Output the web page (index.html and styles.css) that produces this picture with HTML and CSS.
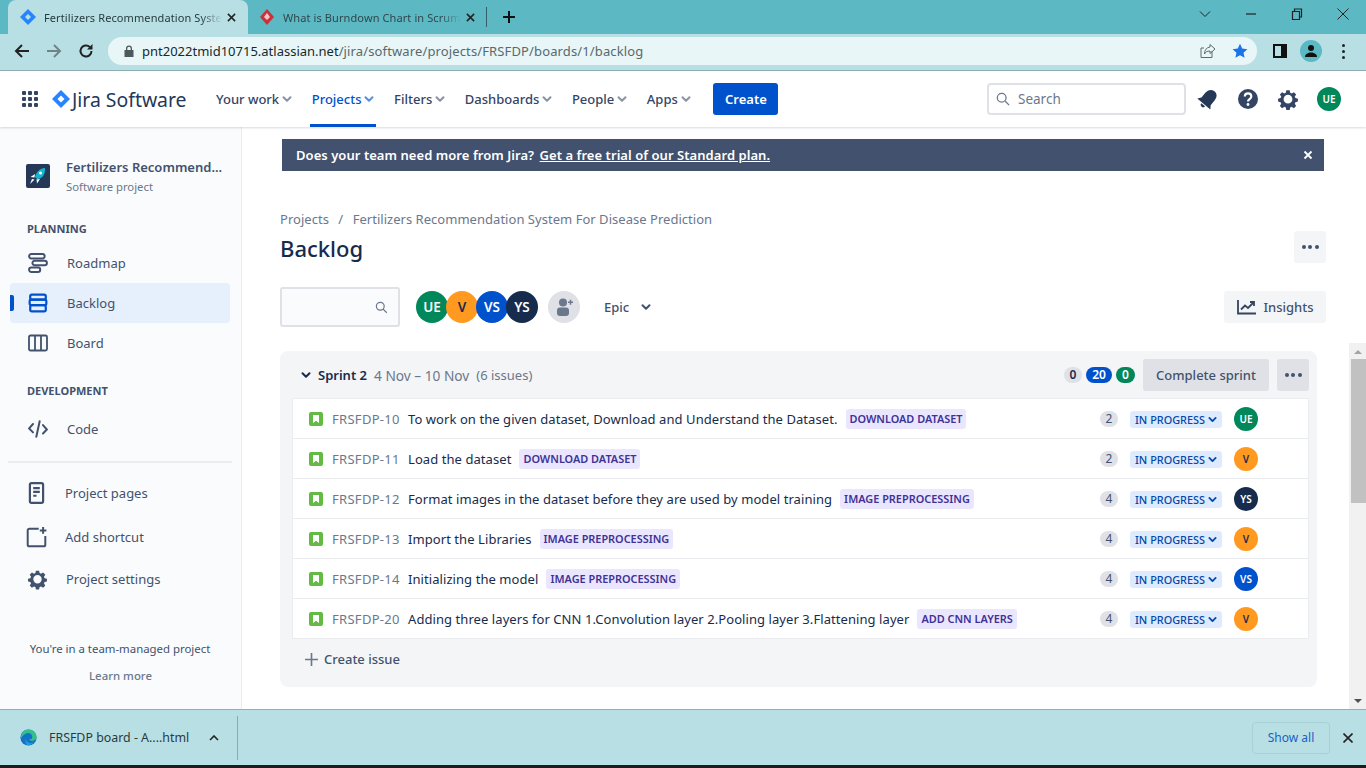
FILE: index.html
```html
<!DOCTYPE html>
<html lang="en">
<head>
    <meta charset="UTF-8" />
    <title>Backlog - Jira</title>
    <link rel="stylesheet" href="styles.css">
</head>
<body>
    <svg class="defs" width="0" height="0">
        <symbol id="story" viewBox="0 0 14 14">
            <rect width="14" height="14" rx="2" fill="#65ba43"/>
            <path d="M4 3h6v8L7 8.8 4 11z" fill="#fff"/>
        </symbol>
        <symbol id="chev" viewBox="0 0 10 10">
            <path d="M1.5 3.2 5 6.7l3.5-3.5" fill="none" stroke="currentColor" stroke-width="2" stroke-linecap="round" stroke-linejoin="round"/>
        </symbol>
        <symbol id="gear" viewBox="0 0 24 24">
            <path fill="currentColor" fill-rule="evenodd" d="M10.2 2.5h3.6l.6 2.7 1.6.7 2.4-1.4 2.5 2.5-1.5 2.4.7 1.6 2.7.6v3.2l-2.7.7-.7 1.6 1.5 2.4-2.5 2.5-2.4-1.5-1.6.7-.6 2.7h-3.6l-.6-2.7-1.6-.7-2.4 1.5-2.5-2.5 1.5-2.4-.7-1.6-2.7-.7v-3.2l2.7-.6.7-1.6-1.5-2.4 2.5-2.5 2.4 1.4 1.6-.7zM12 7.4a4.8 4.8 0 1 0 0 9.6 4.8 4.8 0 0 0 0-9.6z"/>
        </symbol>
    </svg>

    <div class="tabbar">
        <div class="tab tab-active">
            <svg class="tab-icon" viewBox="0 0 16 16"><path d="M8 0l8 8-8 8-8-8z" fill="#2684ff"/><path d="M8 5l3 3-3 3-3-3z" fill="#b8e0e4"/></svg>
            <span class="tab-title">Fertilizers Recommendation Syste</span>
            <svg class="tab-x" viewBox="0 0 10 10"><path d="M1 1l8 8M9 1l-8 8" stroke="#222" stroke-width="1.7"/></svg>
        </div>
        <div class="tab tab-second">
            <svg class="tab-icon" viewBox="0 0 16 16"><path d="M8 0l7 8-7 8-7-8z" fill="#c8323c"/><path d="M8 4l3 4-3 3-3-3z" fill="#f3c6c8"/></svg>
            <span class="tab-title">What is Burndown Chart in Scrum</span>
            <svg class="tab-x" viewBox="0 0 10 10"><path d="M1 1l8 8M9 1l-8 8" stroke="#222" stroke-width="1.7"/></svg>
        </div>
        <div class="tab-sep"></div>
        <svg class="new-tab" viewBox="0 0 12 12"><path d="M6 0v12M0 6h12" stroke="#111" stroke-width="2"/></svg>
        <div class="win-btns">
            <svg viewBox="0 0 12 12"><path d="M1 3.5l5 5 5-5" fill="none" stroke="#222"/></svg>
            <svg viewBox="0 0 12 12"><path d="M1 6h10" stroke="#222" stroke-width="1.2"/></svg>
            <svg viewBox="0 0 12 12"><path d="M1.5 3.5h7v8h-7zM3.5 3.5V1h7v8h-2" fill="none" stroke="#222" stroke-width="1.2"/></svg>
            <svg viewBox="0 0 12 12"><path d="M.5.5l11 11M11.5.5l-11 11" stroke="#222"/></svg>
        </div>
    </div>

    <div class="toolbar">
        <svg class="tool-arrow" viewBox="0 0 16 16"><path d="M15 8H2M8 2 2 8l6 6" fill="none" stroke="#222" stroke-width="2"/></svg>
        <svg class="tool-arrow" viewBox="0 0 16 16"><path d="M1 8h13M8 2l6 6-6 6" fill="none" stroke="#6f8488" stroke-width="2"/></svg>
        <svg class="tool-arrow" viewBox="0 0 16 16"><path d="M13.5 8a5.5 5.5 0 1 1-1.7-4" fill="none" stroke="#222" stroke-width="2"/><path d="M14.5 1v5.5H9z" fill="#222"/></svg>
        <div class="omnibox">
            <svg class="lock" viewBox="0 0 10 12"><path d="M2 5V3.500a3 3 0 0 1 6 0V5h1.500v7H.5V5zm1.300 0h3.400V3.500a1.700 1.700 0 0 0-3.400 0z" fill="#4c5a5e"/></svg>
            <span class="url"><span class="url-host">pnt2022tmid10715.atlassian.net</span><span class="url-path">/jira/software/projects/FRSFDP/boards/1/backlog</span></span>
            <svg class="share" viewBox="0 0 16 16"><path d="M10 1.5l5 4.5-5 4.5V8C7 8 5.500 9 4.500 11c0-4 2-6.500 5.500-7zM12 8v6.500H1V5h3" fill="none" stroke="#5b6d71"/></svg>
            <svg class="star" viewBox="0 0 16 16"><path d="M8 .8l2.200 4.800 5.200.6-3.900 3.500 1.100 5.100L8 12.200l-4.600 2.600 1.100-5.100L.6 6.200l5.200-.6z" fill="#1a73e8"/></svg>
        </div>
        <svg class="side-panel" viewBox="0 0 14 14"><path d="M1 1h12v12H1z" fill="none" stroke="#111" stroke-width="2"/><path d="M8 1h5v12H8z" fill="#111"/></svg>
        <div class="profile">
            <svg viewBox="0 0 14 14"><circle cx="7" cy="4" r="3" fill="#111"/><path d="M1 13c0-6 12-6 12 0z" fill="#111"/></svg>
        </div>
        <div class="kebab"><i></i><i></i><i></i></div>
    </div>

    <header class="topnav">
        <svg class="apps" viewBox="0 0 16 16" fill="#344563">
            <rect width="4" height="4" rx="1"/><rect x="6" width="4" height="4" rx="1"/><rect x="12" width="4" height="4" rx="1"/>
            <rect y="6" width="4" height="4" rx="1"/><rect x="6" y="6" width="4" height="4" rx="1"/><rect x="12" y="6" width="4" height="4" rx="1"/>
            <rect y="12" width="4" height="4" rx="1"/><rect x="6" y="12" width="4" height="4" rx="1"/><rect x="12" y="12" width="4" height="4" rx="1"/>
        </svg>
        <svg class="jira-logo" viewBox="0 0 18 18"><path d="M9 0l9 9-9 9-9-9z" fill="#2684ff"/><path d="M9 5.500 12.500 9 9 12.500 5.500 9z" fill="#fff"/></svg>
        <span class="jira-name">Jira Software</span>
        <nav class="nav-items">
            <a class="nav-item">Your work<svg><use href="#chev"/></svg></a>
            <a class="nav-item nav-active">Projects<svg><use href="#chev"/></svg></a>
            <a class="nav-item">Filters<svg><use href="#chev"/></svg></a>
            <a class="nav-item">Dashboards<svg><use href="#chev"/></svg></a>
            <a class="nav-item">People<svg><use href="#chev"/></svg></a>
            <a class="nav-item">Apps<svg><use href="#chev"/></svg></a>
        </nav>
        <button class="create">Create</button>
        <div class="nav-search">
            <svg viewBox="0 0 16 16"><circle cx="6.500" cy="6.500" r="5" fill="none" stroke="#6b778c" stroke-width="1.500"/><path d="M10.500 10.500 15 15" stroke="#6b778c" stroke-width="1.500"/></svg>
            <span>Search</span>
        </div>
        <svg class="nav-icon bell" viewBox="0 0 24 24"><g transform="rotate(40 12 12)" fill="#253858"><path d="M12 2C8 2 6 5 6 9v6l-2.500 3.500h17L18 15V9c0-4-2-7-6-7z"/><path d="M9.500 19.500h5a2.500 2.500 0 0 1-5 0z"/></g></svg>
        <svg class="nav-icon" viewBox="0 0 24 24"><circle cx="12" cy="12" r="10" fill="#344563"/><path d="M8.800 9.500c0-4.200 6.500-4.200 6.500 0 0 2.600-3.300 2.500-3.300 5" fill="none" stroke="#fff" stroke-width="2.200"/><circle cx="12" cy="17.500" r="1.400" fill="#fff"/></svg>
        <svg class="nav-icon gear-dark"><use href="#gear"/></svg>
        <div class="avatar avatar-green nav-avatar">UE</div>
    </header>

    <div class="workspace">
        <aside class="sidebar">
            <div class="project">
                <svg class="project-logo" viewBox="0 0 24 24">
                    <rect width="24" height="24" rx="2" fill="#253858"/>
                    <path d="M19 4c-5 .5-8.500 3.500-10 9l2.500 2.500c5-1.500 8-5 7.500-11.500z" fill="#13b5d1"/>
                    <circle cx="14.500" cy="9" r="1.500" fill="#fff"/>
                    <path d="M9 10 4.500 13l4 .5zM14 15l-3 4.500-.5-4zM8.500 15.500 4 20l2-5z" fill="#fff"/>
                </svg>
                <div class="project-text">
                    <div class="project-name">Fertilizers Recommend...</div>
                    <div class="project-type">Software project</div>
                </div>
            </div>

            <div class="side-heading">PLANNING</div>
            <a class="side-item">
                <svg viewBox="0 0 18 18" fill="none" stroke="currentColor" stroke-width="1.800"><rect x="1" y="1" width="14" height="4" rx="2"/><rect x="4" y="7" width="13" height="4" rx="2"/><rect x="1" y="13" width="10" height="4" rx="2"/></svg>
                Roadmap
            </a>
            <a class="side-item side-active">
                <svg viewBox="0 0 18 18" fill="none" stroke="currentColor" stroke-width="2"><rect x="2" y="1.500" width="14" height="4.500" rx="1.500"/><rect x="1.500" y="6" width="15" height="5" rx="1.500"/><rect x="2" y="11" width="14" height="5.500" rx="1.500"/></svg>
                Backlog
            </a>
            <a class="side-item">
                <svg viewBox="0 0 20 18" fill="none" stroke="currentColor" stroke-width="1.800"><rect x="1" y="1.500" width="18" height="15" rx="1.500"/><path d="M7 1.500v15M13 1.500v15"/></svg>
                Board
            </a>

            <div class="side-heading side-heading-dev">DEVELOPMENT</div>
            <a class="side-item">
                <svg viewBox="0 0 18 18" fill="none" stroke="currentColor" stroke-width="1.800" stroke-linecap="round"><path d="M4.500 4.500 1 8.500l3.500 3.500M13.500 5.500l3.500 4-3.500 3.500M10.500 2 7.500 16"/></svg>
                Code
            </a>

            <div class="side-rule"></div>

            <a class="side-link side-link-pages">
                <svg viewBox="0 0 18 20" fill="none" stroke="currentColor" stroke-width="2"><rect x="3" y="1" width="12" height="18" rx="1.500"/><path d="M6 5.500h6M6 9h6M6 12.500h3"/></svg>
                Project pages
            </a>
            <a class="side-link side-link-add">
                <svg viewBox="0 0 18 20" fill="none" stroke="currentColor" stroke-width="1.800"><path d="M11 2.500H2.500a1.500 1.500 0 0 0-1.500 1.500v13a1.500 1.500 0 0 0 1.500 1.500h13a1.500 1.500 0 0 0 1.500-1.500V9"/><path d="M15 1v6M12 4h6"/></svg>
                Add shortcut
            </a>
            <a class="side-link side-link-settings">
                <svg><use href="#gear"/></svg>
                Project settings
            </a>

            <p class="team-note">You're in a team-managed project</p>
            <p class="learn-more">Learn more</p>
        </aside>

        <main class="main">
            <div class="banner">
                <span>Does your team need more from Jira? <a class="banner-link">Get a free trial of our Standard plan.</a></span>
                <svg viewBox="0 0 10 10"><path d="M1.500 1.500l7 7M8.500 1.500l-7 7" stroke="#fff" stroke-width="1.800"/></svg>
            </div>

            <div class="crumbs">Projects <span class="crumb-sep">/</span> Fertilizers Recommendation System For Disease Prediction</div>
            <div class="title-row">
                <h1>Backlog</h1>
                <button class="icon-btn"><i></i><i></i><i></i></button>
            </div>

            <div class="filters">
                <div class="filter-search">
                    <svg viewBox="0 0 16 16"><circle cx="6.500" cy="6.500" r="4.800" fill="none" stroke="#6b778c" stroke-width="1.500"/><path d="M10 10l4.500 4.500" stroke="#6b778c" stroke-width="1.500"/></svg>
                </div>
                <div class="people">
                    <div class="avatar avatar-green">UE</div>
                    <div class="avatar avatar-orange">V</div>
                    <div class="avatar avatar-blue">VS</div>
                    <div class="avatar avatar-navy">YS</div>
                </div>
                <div class="add-person">
                    <svg viewBox="0 0 20 20" fill="#6b778c"><circle cx="9" cy="5.500" r="4"/><rect x="3" y="10.500" width="12" height="8.500" rx="3"/><path d="M14 4.500h5v1.500h-5zM15.750 2.750h1.500v5h-1.500z"/></svg>
                </div>
                <div class="epic">Epic<svg><use href="#chev"/></svg></div>
                <button class="insights">
                    <svg viewBox="0 0 20 16" fill="none" stroke="#344563" stroke-width="1.800"><path d="M1 1v13.500h18"/><path d="M4 10.500l4-4 3 2.500 5.500-5.500"/><path d="M13 3h4v4"/></svg>
                    Insights
                </button>
            </div>

            <div class="backlog">
                <div class="backlog-scroll">
                    <section class="sprint">
                        <div class="sprint-head">
                            <svg class="sprint-chev"><use href="#chev"/></svg>
                            <span class="sprint-name">Sprint 2</span>
                            <span class="sprint-meta">4 Nov – 10 Nov</span>
                            <span class="sprint-meta sprint-total">(6 issues)</span>
                            <div class="counts">
                                <span class="count count-grey">0</span>
                                <span class="count count-blue">20</span>
                                <span class="count count-green">0</span>
                            </div>
                            <button class="complete">Complete sprint</button>
                            <button class="icon-btn icon-btn-dark"><i></i><i></i><i></i></button>
                        </div>

                        <ul class="issues">
                            <li class="issue">
                                <svg class="story"><use href="#story"/></svg>
                                <span class="issue-key">FRSFDP-10</span>
                                <span class="issue-sum">To work on the given dataset, Download and Understand the Dataset.</span>
                                <span class="epic-tag">DOWNLOAD DATASET</span>
                                <span class="estimate">2</span>
                                <span class="status">IN PROGRESS<svg><use href="#chev"/></svg></span>
                                <div class="avatar avatar-green avatar-small">UE</div>
                            </li>
                            <li class="issue">
                                <svg class="story"><use href="#story"/></svg>
                                <span class="issue-key">FRSFDP-11</span>
                                <span class="issue-sum">Load the dataset</span>
                                <span class="epic-tag">DOWNLOAD DATASET</span>
                                <span class="estimate">2</span>
                                <span class="status">IN PROGRESS<svg><use href="#chev"/></svg></span>
                                <div class="avatar avatar-orange avatar-small">V</div>
                            </li>
                            <li class="issue">
                                <svg class="story"><use href="#story"/></svg>
                                <span class="issue-key">FRSFDP-12</span>
                                <span class="issue-sum">Format images in the dataset before they are used by model training</span>
                                <span class="epic-tag">IMAGE PREPROCESSING</span>
                                <span class="estimate">4</span>
                                <span class="status">IN PROGRESS<svg><use href="#chev"/></svg></span>
                                <div class="avatar avatar-navy avatar-small">YS</div>
                            </li>
                            <li class="issue">
                                <svg class="story"><use href="#story"/></svg>
                                <span class="issue-key">FRSFDP-13</span>
                                <span class="issue-sum">Import the Libraries</span>
                                <span class="epic-tag">IMAGE PREPROCESSING</span>
                                <span class="estimate">4</span>
                                <span class="status">IN PROGRESS<svg><use href="#chev"/></svg></span>
                                <div class="avatar avatar-orange avatar-small">V</div>
                            </li>
                            <li class="issue">
                                <svg class="story"><use href="#story"/></svg>
                                <span class="issue-key">FRSFDP-14</span>
                                <span class="issue-sum">Initializing the model</span>
                                <span class="epic-tag">IMAGE PREPROCESSING</span>
                                <span class="estimate">4</span>
                                <span class="status">IN PROGRESS<svg><use href="#chev"/></svg></span>
                                <div class="avatar avatar-blue avatar-small">VS</div>
                            </li>
                            <li class="issue">
                                <svg class="story"><use href="#story"/></svg>
                                <span class="issue-key">FRSFDP-20</span>
                                <span class="issue-sum">Adding three layers for CNN 1.Convolution layer 2.Pooling layer 3.Flattening layer</span>
                                <span class="epic-tag">ADD CNN LAYERS</span>
                                <span class="estimate">4</span>
                                <span class="status">IN PROGRESS<svg><use href="#chev"/></svg></span>
                                <div class="avatar avatar-orange avatar-small">V</div>
                            </li>
                        </ul>

                        <div class="create-issue">
                            <svg viewBox="0 0 12 12"><path d="M6 0v12M0 6h12" stroke="#6b778c" stroke-width="1.500"/></svg>
                            Create issue
                        </div>
                    </section>
                </div>
                <div class="scrollbar">
                    <span class="arrow-up"></span>
                    <span class="thumb"></span>
                    <span class="arrow-down"></span>
                </div>
            </div>
        </main>
    </div>

    <footer class="downloads">
        <svg class="edge" viewBox="0 0 20 20">
            <circle cx="10" cy="10" r="9.500" fill="#1272c4"/>
            <path d="M10 .5c5 0 9.500 3.500 9.500 9 0 3-2.500 4.500-5 4.500-2 0-3.500-1-3.500-2 2 .5 3.500-.5 3.500-2.500C14.500 6 11 4 8 5 5 6 3 8 1 11 1 5 5 .5 10 .5z" fill="#35c08a"/>
            <path d="M7 10c-1 3 1.500 6 5 6.500 2 .2 4-.5 5-2-2 4-6 5-8 4.500C6 18 6 12.500 7 10z" fill="#1e9be0"/>
        </svg>
        <span class="file-name">FRSFDP board - A....html</span>
        <svg class="file-chev" viewBox="0 0 10 6"><path d="M1 5l4-4 4 4" fill="none" stroke="#222" stroke-width="1.600"/></svg>
        <div class="file-sep"></div>
        <button class="show-all">Show all</button>
        <svg class="dl-close" viewBox="0 0 10 10"><path d="M.5.5l9 9M9.500.5l-9 9" stroke="#222" stroke-width="1.600"/></svg>
    </footer>
    <div class="taskbar-edge"></div>
</body>
</html>
```

FILE: styles.css
```css
* {
    box-sizing: border-box;
}
html, body {
    height: 100%;
}
body {
    font-family: "Noto Sans", Arial, sans-serif;
    font-size: 13px;
    color: #172b4d;
    margin: 0;
    display: flex;
    flex-direction: column;
    height: 768px;
    overflow: hidden;
    background: #fff;
}
.defs {
    position: absolute;
}
button {
    font-family: inherit;
    border: none;
}

/* browser chrome */
.tabbar {
    height: 34px;
    background: #5cb8c2;
    display: flex;
    align-items: flex-end;
    padding-left: 8px;
    flex-shrink: 0;
}
.tab {
    width: 240px;
    height: 34px;
    display: flex;
    align-items: center;
    padding: 0 12px;
    color: #30474c;
    font-size: 11px;
    letter-spacing: 0.1px;
}
.tab-active {
    background: #b8e0e4;
    border-radius: 8px 8px 0 0;
    color: #253a3e;
}
.tab-second {
    margin-left: -1px;
}
.tab-icon {
    width: 16px;
    height: 16px;
    margin-right: 8px;
    flex-shrink: 0;
}
.tab-title {
    white-space: nowrap;
    -webkit-mask-image: linear-gradient(to right, #000 88%, transparent);
    mask-image: linear-gradient(to right, #000 88%, transparent);
}
.tab-x {
    width: 9px;
    height: 9px;
    margin-left: auto;
    flex-shrink: 0;
}
.tab-sep {
    width: 1px;
    height: 20px;
    background: #35606a;
    margin: 0 0 7px -1px;
}
.new-tab {
    width: 12px;
    height: 12px;
    margin: 0 0 11px 16px;
}
.win-btns {
    margin-left: auto;
    display: flex;
    align-self: flex-start;
    padding: 8px 17px 0 0;
    gap: 34px;
}
.win-btns svg {
    width: 12px;
    height: 12px;
}
.toolbar {
    height: 37px;
    flex-shrink: 0;
    background: #b8e0e4;
    border-bottom: 1px solid #8fb0b4;
    display: flex;
    align-items: center;
    padding: 0 0 2px 14px;
}
.tool-arrow {
    width: 16px;
    height: 16px;
    margin-right: 16px;
}
.omnibox {
    width: 1149px;
    height: 28px;
    margin-left: -2px;
    border-radius: 14px;
    background: #e9f6f7;
    display: flex;
    align-items: center;
    padding-left: 16px;
    font-size: 13px;
    color: #566a6e;
}
.lock {
    width: 10px;
    height: 12px;
    margin-right: 8px;
}
.url-host {
    color: #16292d;
}
.url-path {
    letter-spacing: 0.13px;
}
.share {
    width: 16px;
    height: 16px;
    margin-left: auto;
}
.star {
    width: 16px;
    height: 16px;
    margin: 0 9px 0 16px;
}
.side-panel {
    width: 14px;
    height: 14px;
    margin-left: 16px;
}
.profile {
    width: 22px;
    height: 22px;
    border-radius: 50%;
    background: #5cb8c2;
    margin-left: 13px;
    display: flex;
    align-items: center;
    justify-content: center;
}
.profile svg {
    width: 14px;
    height: 14px;
}
.kebab {
    margin-left: 20px;
    display: flex;
    flex-direction: column;
    gap: 3px;
}
.kebab i {
    display: block;
    width: 3px;
    height: 3px;
    border-radius: 50%;
    background: #222;
}

/* jira top nav */
.topnav {
    height: 56px;
    flex-shrink: 0;
    display: flex;
    align-items: center;
    padding-left: 22px;
    box-shadow: 0 1px 2px rgba(9, 30, 66, 0.16);
    position: relative;
    z-index: 1;
    background: #fff;
}
.apps {
    width: 16px;
    height: 16px;
}
.jira-logo {
    width: 18px;
    height: 18px;
    margin-left: 14px;
}
.jira-name {
    font-size: 19.4px;
    color: #253858;
    margin-left: 2px;
    width: 115px;
    white-space: nowrap;
}
.nav-items {
    display: flex;
    margin-left: 27px;
    height: 56px;
}
.nav-item {
    display: flex;
    align-items: center;
    padding: 0 2px;
    margin-right: 15.6px;
    color: #344563;
    font-weight: 500;
    white-space: nowrap;
}
.nav-item svg {
    width: 10px;
    height: 10px;
    margin-left: 3px;
    color: #8993a4;
}
.nav-active {
    color: #0052cc;
    box-shadow: inset 0 -3px 0 #0052cc;
}
.nav-active svg {
    color: #5a8fdc;
}
.create {
    width: 65px;
    height: 32px;
    background: #0052cc;
    color: #fff;
    font-size: 13px;
    font-weight: 600;
    border-radius: 3px;
    margin-left: 5px;
}
.nav-search {
    width: 199px;
    height: 32px;
    margin-left: auto;
    border: 2px solid #dfe1e6;
    border-radius: 4px;
    display: flex;
    align-items: center;
    padding-left: 7px;
    color: #6b778c;
    font-size: 13.5px;
}
.nav-search svg {
    width: 14px;
    height: 14px;
    margin-right: 8px;
}
.nav-icon {
    width: 24px;
    height: 24px;
    margin-left: 16px;
    color: #344563;
}
.bell {
    margin-left: 10px;
}
.gear-dark {
    width: 22px;
    height: 22px;
    margin: 0 1px 0 17px;
}
.nav-avatar {
    margin: 0 25px 0 17px;
}

/* avatars */
.avatar {
    width: 24px;
    height: 24px;
    border-radius: 50%;
    display: flex;
    align-items: center;
    justify-content: center;
    font-size: 10px;
    font-weight: 600;
    color: #fff;
    flex-shrink: 0;
}
.avatar-green {
    background: #00875a;
}
.avatar-orange {
    background: #ff991f;
    color: #172b4d;
}
.avatar-blue {
    background: #0052cc;
}
.avatar-navy {
    background: #172b4d;
}

/* sidebar */
.workspace {
    flex: 1;
    display: flex;
    min-height: 0;
}
.sidebar {
    width: 242px;
    flex-shrink: 0;
    background: #fafbfc;
    border-right: 1px solid #ebecf0;
    padding-top: 30px;
    color: #42526e;
}
.project {
    display: flex;
    align-items: flex-start;
    padding-left: 26px;
}
.project-logo {
    width: 24px;
    height: 24px;
    margin: 7px 16px 0 0;
}
.project-text {
    margin-top: 1px;
}
.project-name {
    font-size: 13px;
    font-weight: 600;
    color: #42526e;
    line-height: 18px;
    white-space: nowrap;
}
.project-type {
    font-size: 11.3px;
    color: #6b778c;
    line-height: 18px;
    margin-top: 2px;
}
.side-heading {
    font-size: 11px;
    font-weight: 700;
    color: #42526e;
    margin: 25px 0 0 27px;
    line-height: 16px;
}
.side-heading-dev {
    margin-top: 20px;
}
.side-item {
    height: 40px;
    width: 220px;
    margin-left: 10px;
    display: flex;
    align-items: center;
    padding-left: 18px;
    border-radius: 4px;
    gap: 19px;
    color: #42526e;
}
.side-heading + .side-item {
    margin-top: 6px;
}
.side-heading-dev + .side-item {
    margin-top: 10px;
}
.side-item svg {
    width: 20px;
    height: 20px;
}
.side-active {
    background: #e6effc;
    position: relative;
}
.side-active::before {
    content: "";
    position: absolute;
    left: 0;
    top: 12px;
    width: 4px;
    height: 16px;
    background: #0052cc;
    border-radius: 0 2px 2px 0;
}
.side-active svg {
    color: #0052cc;
}
.side-rule {
    height: 2px;
    width: 224px;
    margin: 12px 0 0 8px;
    background: #ebecf0;
}
.side-link {
    display: flex;
    align-items: center;
    padding-left: 26px;
    gap: 18px;
    height: 24px;
    color: #42526e;
}
.side-link svg {
    width: 21px;
    height: 22px;
}
.side-link-pages {
    margin-top: 18px;
}
.side-link-add {
    margin-top: 20px;
}
.side-link-settings {
    margin-top: 18px;
    padding-left: 27px;
}
.team-note {
    font-size: 11.4px;
    text-align: center;
    color: #42526e;
    margin: 50px 0 0;
    padding-right: 1px;
    line-height: 16px;
}
.learn-more {
    font-size: 11.4px;
    font-weight: 500;
    text-align: center;
    color: #6b778c;
    margin: 11px 0 0;
    line-height: 16px;
}

/* main */
.main {
    flex: 1;
    min-width: 0;
    display: flex;
    flex-direction: column;
}
.banner {
    height: 32px;
    margin: 12px 42px 0 40px;
    background: #42526e;
    color: #fff;
    font-weight: 600;
    letter-spacing: 0.05px;
    display: flex;
    align-items: center;
    justify-content: space-between;
    padding: 0 11px 0 14px;
    flex-shrink: 0;
}
.banner-link {
    text-decoration: underline;
    margin-left: 2px;
}
.banner svg {
    width: 10px;
    height: 10px;
}
.crumbs {
    margin: 39px 0 0 38px;
    color: #6b778c;
    line-height: 18px;
    letter-spacing: 0.03px;
}
.crumb-sep {
    margin: 0 6px;
}
.title-row {
    display: flex;
    align-items: center;
    justify-content: space-between;
    margin: 3px 40px 0 38px;
    height: 32px;
}
h1 {
    margin: 0;
    padding-top: 2px;
    font-size: 22px;
    font-weight: 500;
    color: #172b4d;
}
.icon-btn {
    width: 32px;
    height: 32px;
    background: #f4f5f7;
    border-radius: 3px;
    display: flex;
    align-items: center;
    justify-content: center;
    gap: 2.5px;
    padding: 0;
}
.icon-btn i {
    display: block;
    width: 4px;
    height: 4px;
    border-radius: 50%;
    background: #42526e;
}
.icon-btn-dark {
    background: #dfe1e6;
    margin-left: 8px;
}
.filters {
    display: flex;
    align-items: center;
    margin: 24px 40px 0 38px;
    height: 40px;
}
.filter-search {
    width: 120px;
    height: 40px;
    border: 2px solid #dfe1e6;
    border-radius: 3px;
    background: #fafbfc;
    display: flex;
    align-items: center;
    justify-content: flex-end;
    padding-right: 10px;
}
.filter-search svg {
    width: 13px;
    height: 13px;
}
.people {
    display: flex;
    margin-left: 16px;
}
.people .avatar {
    width: 32px;
    height: 32px;
    font-size: 13.5px;
    margin-right: -2px;
}
.add-person {
    width: 32px;
    height: 32px;
    border-radius: 50%;
    background: #dfe1e6;
    margin-left: 12px;
    display: flex;
    align-items: center;
    justify-content: center;
}
.add-person svg {
    width: 20px;
    height: 20px;
}
.epic {
    display: flex;
    align-items: center;
    margin-left: 24px;
    color: #42526e;
    font-weight: 500;
}
.epic svg {
    width: 10px;
    height: 10px;
    margin-left: 12px;
    color: #42526e;
}
.insights {
    width: 102px;
    height: 32px;
    margin-left: auto;
    background: #f4f5f7;
    border-radius: 3px;
    display: flex;
    align-items: center;
    justify-content: center;
    gap: 6px;
    padding-left: 7px;
    font-size: 13px;
    font-weight: 500;
    color: #42526e;
}
.insights svg {
    width: 20px;
    height: 16px;
}

/* backlog */
.backlog {
    flex: 1;
    min-height: 0;
    display: flex;
    margin-top: 16px;
}
.backlog-scroll {
    flex: 1;
    min-width: 0;
    padding: 8px 32px 0 38px;
}
.sprint {
    background: #f4f5f7;
    border-radius: 8px;
    height: 336px;
    padding: 0 8px 0 12px;
}
.sprint-head {
    height: 48px;
    display: flex;
    align-items: center;
    padding-left: 9px;
}
.sprint-chev {
    width: 10px;
    height: 10px;
    margin-right: 7px;
    color: #172b4d;
}
.sprint-name {
    font-weight: 600;
    color: #172b4d;
    margin-right: 7px;
}
.sprint-meta {
    color: #6b778c;
    font-size: 13.7px;
    margin-right: 7px;
}
.sprint-total {
    font-size: 13px;
}
.counts {
    margin-left: auto;
    display: flex;
    gap: 4px;
    margin-right: 8px;
}
.count {
    height: 16px;
    min-width: 18px;
    border-radius: 8px;
    font-size: 12px;
    font-weight: 600;
    line-height: 16px;
    text-align: center;
    padding: 0 4px;
}
.count-grey {
    background: #dfe1e6;
    color: #172b4d;
}
.count-blue {
    background: #0052cc;
    color: #fff;
    min-width: 26px;
}
.count-green {
    background: #00875a;
    color: #fff;
    min-width: 19px;
}
.complete {
    width: 126px;
    height: 32px;
    background: #dfe1e6;
    border-radius: 3px;
    font-size: 13px;
    font-weight: 500;
    color: #42526e;
}
.issues {
    list-style-type: none;
    margin: -1px 0 0;
    padding: 0;
    background: #fff;
    border: 1px solid #ebecf0;
    border-bottom-width: 0;
}
.issue {
    height: 40px;
    display: flex;
    align-items: center;
    padding: 0 50px 0 16px;
    border-bottom: 1px solid #ebecf0;
}
.story {
    width: 14px;
    height: 14px;
    flex-shrink: 0;
}
.issue-key {
    width: 76px;
    margin-left: 9px;
    color: #6b778c;
    white-space: nowrap;
    flex-shrink: 0;
    letter-spacing: 0.3px;
}
.issue-sum {
    color: #172b4d;
    white-space: nowrap;
    letter-spacing: 0.07px;
}
.epic-tag {
    margin-left: 8px;
    height: 20px;
    line-height: 20px;
    padding: 0 4px;
    border-radius: 3px;
    font-size: 10.9px;
    font-weight: 600;
    white-space: nowrap;
    color: #403294;
    background: #eae6ff;
}
.estimate {
    margin-left: auto;
    width: 18px;
    height: 16px;
    border-radius: 8px;
    background: #dfe1e6;
    font-size: 12px;
    line-height: 16px;
    text-align: center;
    color: #42526e;
}
.status {
    margin: 1px 0 0 12px;
    width: 92px;
    height: 17px;
    border-radius: 3px;
    background: #deebff;
    color: #0747a6;
    font-size: 10.9px;
    font-weight: 500;
    display: flex;
    align-items: center;
    justify-content: space-between;
    padding: 0 5px;
    white-space: nowrap;
}
.status svg {
    width: 9px;
    height: 9px;
}
.avatar-small {
    margin-left: 12px;
}
.create-issue {
    height: 40px;
    display: flex;
    align-items: center;
    padding-left: 13px;
    gap: 6px;
    color: #42526e;
    font-weight: 500;
}
.create-issue svg {
    width: 13px;
    height: 13px;
}
.scrollbar {
    width: 17px;
    flex-shrink: 0;
    background: #f1f1f1;
    display: flex;
    flex-direction: column;
    align-items: center;
}
.arrow-up {
    width: 0;
    height: 0;
    border: 4px solid transparent;
    border-top-width: 0;
    border-bottom: 4px solid #a3a3a3;
    margin: 7px 0 5px;
}
.thumb {
    width: 15px;
    height: 144px;
    background: #c1c1c1;
    align-self: flex-end;
}
.arrow-down {
    width: 0;
    height: 0;
    border: 4px solid transparent;
    border-bottom-width: 0;
    border-top: 4px solid #505050;
    margin: auto 0 6px;
}

/* download shelf */
.downloads {
    height: 56px;
    flex-shrink: 0;
    background: #b8e0e4;
    border-top: 1px solid #8fb0b4;
    display: flex;
    align-items: center;
    padding-left: 20px;
    color: #2b3a3d;
    font-size: 12.4px;
}
.edge {
    width: 17px;
    height: 17px;
}
.file-name {
    margin-left: 12px;
    width: 141px;
    white-space: nowrap;
}
.file-chev {
    width: 10px;
    height: 6px;
    margin-left: 19px;
}
.file-sep {
    width: 1px;
    height: 44px;
    background: #8fa9ad;
    margin-left: 18px;
}
.show-all {
    margin-left: auto;
    width: 78px;
    height: 32px;
    background: transparent;
    border: 1px solid #a9d0d6;
    border-radius: 4px;
    color: #1a5fc4;
    font-size: 12px;
}
.dl-close {
    width: 10px;
    height: 10px;
    margin: 0 13px;
}
.taskbar-edge {
    height: 3px;
    flex-shrink: 0;
    background: #1c1c1c;
}
```
